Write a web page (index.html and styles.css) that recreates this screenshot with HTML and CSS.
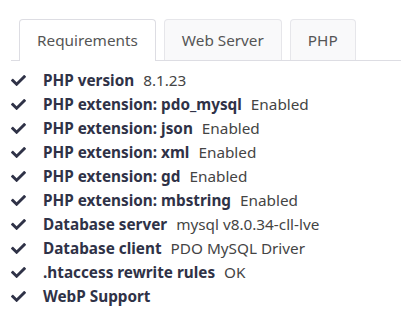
FILE: index.html
```html
<!DOCTYPE html>
<html lang="en">
<head>
  <meta charset="UTF-8">
  <title>Requirements</title>
  <link rel="stylesheet" href="styles.css">
</head>
<body>
  <div class="panel">
    <ul class="tabs">
      <li class="tab active">Requirements</li>
      <li class="tab">Web Server</li>
      <li class="tab">PHP</li>
    </ul>

    <ul class="checks">
      <li><svg class="ok" viewBox="0 0 512 512"><path d="M173.9 439.4l-166.4-166.4c-10-10-10-26.2 0-36.2l36.2-36.2c10-10 26.2-10 36.2 0L192 312.7 432.1 72.6c10-10 26.2-10 36.2 0l36.2 36.2c10 10 10 26.2 0 36.2l-294.4 294.4c-10 10-26.2 10-36.2 0z"/></svg><b>PHP version</b><span>8.1.23</span></li>
      <li><svg class="ok" viewBox="0 0 512 512"><path d="M173.9 439.4l-166.4-166.4c-10-10-10-26.2 0-36.2l36.2-36.2c10-10 26.2-10 36.2 0L192 312.7 432.1 72.6c10-10 26.2-10 36.2 0l36.2 36.2c10 10 10 26.2 0 36.2l-294.4 294.4c-10 10-26.2 10-36.2 0z"/></svg><b>PHP extension: pdo_mysql</b><span>Enabled</span></li>
      <li><svg class="ok" viewBox="0 0 512 512"><path d="M173.9 439.4l-166.4-166.4c-10-10-10-26.2 0-36.2l36.2-36.2c10-10 26.2-10 36.2 0L192 312.7 432.1 72.6c10-10 26.2-10 36.2 0l36.2 36.2c10 10 10 26.2 0 36.2l-294.4 294.4c-10 10-26.2 10-36.2 0z"/></svg><b>PHP extension: json</b><span>Enabled</span></li>
      <li><svg class="ok" viewBox="0 0 512 512"><path d="M173.9 439.4l-166.4-166.4c-10-10-10-26.2 0-36.2l36.2-36.2c10-10 26.2-10 36.2 0L192 312.7 432.1 72.6c10-10 26.2-10 36.2 0l36.2 36.2c10 10 10 26.2 0 36.2l-294.4 294.4c-10 10-26.2 10-36.2 0z"/></svg><b>PHP extension: xml</b><span>Enabled</span></li>
      <li><svg class="ok" viewBox="0 0 512 512"><path d="M173.9 439.4l-166.4-166.4c-10-10-10-26.2 0-36.2l36.2-36.2c10-10 26.2-10 36.2 0L192 312.7 432.1 72.6c10-10 26.2-10 36.2 0l36.2 36.2c10 10 10 26.2 0 36.2l-294.4 294.4c-10 10-26.2 10-36.2 0z"/></svg><b>PHP extension: gd</b><span>Enabled</span></li>
      <li><svg class="ok" viewBox="0 0 512 512"><path d="M173.9 439.4l-166.4-166.4c-10-10-10-26.2 0-36.2l36.2-36.2c10-10 26.2-10 36.2 0L192 312.7 432.1 72.6c10-10 26.2-10 36.2 0l36.2 36.2c10 10 10 26.2 0 36.2l-294.4 294.4c-10 10-26.2 10-36.2 0z"/></svg><b>PHP extension: mbstring</b><span>Enabled</span></li>
      <li><svg class="ok" viewBox="0 0 512 512"><path d="M173.9 439.4l-166.4-166.4c-10-10-10-26.2 0-36.2l36.2-36.2c10-10 26.2-10 36.2 0L192 312.7 432.1 72.6c10-10 26.2-10 36.2 0l36.2 36.2c10 10 10 26.2 0 36.2l-294.4 294.4c-10 10-26.2 10-36.2 0z"/></svg><b>Database server</b><span>mysql v8.0.34-cll-lve</span></li>
      <li><svg class="ok" viewBox="0 0 512 512"><path d="M173.9 439.4l-166.4-166.4c-10-10-10-26.2 0-36.2l36.2-36.2c10-10 26.2-10 36.2 0L192 312.7 432.1 72.6c10-10 26.2-10 36.2 0l36.2 36.2c10 10 10 26.2 0 36.2l-294.4 294.4c-10 10-26.2 10-36.2 0z"/></svg><b>Database client</b><span>PDO MySQL Driver</span></li>
      <li><svg class="ok" viewBox="0 0 512 512"><path d="M173.9 439.4l-166.4-166.4c-10-10-10-26.2 0-36.2l36.2-36.2c10-10 26.2-10 36.2 0L192 312.7 432.1 72.6c10-10 26.2-10 36.2 0l36.2 36.2c10 10 10 26.2 0 36.2l-294.4 294.4c-10 10-26.2 10-36.2 0z"/></svg><b>.htaccess rewrite rules</b><span>OK</span></li>
      <li><svg class="ok" viewBox="0 0 512 512"><path d="M173.9 439.4l-166.4-166.4c-10-10-10-26.2 0-36.2l36.2-36.2c10-10 26.2-10 36.2 0L192 312.7 432.1 72.6c10-10 26.2-10 36.2 0l36.2 36.2c10 10 10 26.2 0 36.2l-294.4 294.4c-10 10-26.2 10-36.2 0z"/></svg><b>WebP Support</b></li>
    </ul>
  </div>
</body>
</html>
```

FILE: styles.css
```css
body {
  font-family: 'Noto Sans', sans-serif;
  font-size: 15.3px;
  margin: 0;
  padding: 0;
  background: #ffffff;
  color: #2f3247;
}

.panel {
  padding: 19px 0 0 11px;
}

.tabs {
  display: flex;
  list-style: none;
  margin: 0;
  padding: 0 0 0 8px;
  border-bottom: 1px solid #dddde3;
}

.tab {
  height: 40px;
  line-height: 40px;
  padding: 0 17px;
  margin-right: 8px;
  margin-bottom: -1px;
  border: 1px solid #e6e6ea;
  border-bottom: none;
  border-radius: 4px 4px 0 0;
  background: #f9f9fa;
  color: #555;
}

.tab.active {
  background: #ffffff;
  border-color: #dddde3;
  height: 41px;
}

.checks {
  list-style: none;
  margin: 7px 0 0 0;
  padding: 0;
}

.checks li {
  display: flex;
  align-items: center;
  height: 24px;
}

.ok {
  width: 15px;
  height: 15px;
  fill: #2f3247;
  margin-right: 17px;
}

.checks b {
  font-weight: 700;
  margin-right: 9px;
}

.checks span {
  color: #444;
}
```
